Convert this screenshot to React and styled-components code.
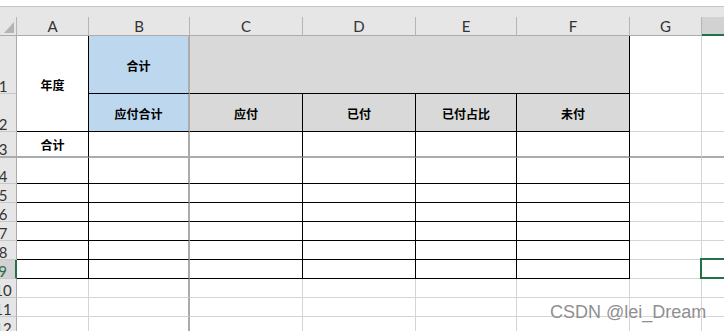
import React from 'react'
import styled, { createGlobalStyle } from 'styled-components'

const BLACK = '#000'
const GRID = '#d4d4d4'
const FREEZE = '#ababab'
const EXCEL_GREEN = '#217346'
const BLUE = '#bdd7ee'
const GRAY = '#d9d9d9'

const COLUMNS = ['A', 'B', 'C', 'D', 'E', 'F', 'G', 'H']
const COL_WIDTHS = [72, 101, 113, 113, 101, 113, 72, 72]
const ROW_HEIGHTS = [58, 38, 26, 26, 19, 19, 19, 19, 19, 19, 19, 19]

const TEXTS = {
  A1: '年度',
  B1: '合计',
  B2: '应付合计',
  C2: '应付',
  D2: '已付',
  E2: '已付占比',
  F2: '未付',
  A3: '合计'
}

const FILLS = {
  B1: BLUE,
  B2: BLUE,
  C1: GRAY,
  C2: GRAY,
  D2: GRAY,
  E2: GRAY,
  F2: GRAY
}

const SELECTED = 'H9'

const rightEdge = (col, row) => {
  if (col === 'B') return [FREEZE, 2]
  if (row <= 9 && 'ACDEF'.includes(col)) return [BLACK, 1]
  return [GRID, 1]
}

const bottomEdge = (col, row) => {
  if (row === 3) return [FREEZE, 2]
  if (row <= 9 && 'ABCDEF'.includes(col)) return [BLACK, 1]
  return [GRID, 1]
}

// merged ranges: A1:A2 and C1:F1
const isHidden = (col, row) => (col === 'A' && row === 2) || (row === 1 && 'DEF'.includes(col))

const GlobalStyle = createGlobalStyle`
  html, body {
    margin: 0;
    padding: 0;
    background: #fff;
  }
`

const Frame = styled.div`
  position: relative;
  width: 724px;
  height: 331px;
  overflow: hidden;
  background: #fff;
`

const TopGap = styled.div`
  height: 6px;
  background: #fff;
  border-bottom: 1px solid #c6c6c6;
`

const HeaderStrip = styled.div`
  height: 10px;
  background: #e6e6e6;
`

const Sheet = styled.div`
  display: grid;
  grid-template-columns: 17px ${COL_WIDTHS.map(w => `${w}px`).join(' ')};
  grid-template-rows: 19px ${ROW_HEIGHTS.map(h => `${h}px`).join(' ')};
  width: max-content;
`

const Corner = styled.div`
  position: relative;
  grid-column: 1;
  grid-row: 1;
  box-sizing: border-box;
  background: #e6e6e6;
  border-right: 1px solid #b5b5b5;
  border-bottom: 1px solid #ababab;
  &:after {
    content: '';
    position: absolute;
    right: 2px;
    bottom: 2px;
    width: 10px;
    height: 11px;
    background: #b4b4b4;
    clip-path: polygon(100% 0, 100% 100%, 0 100%);
  }
`

const ColHead = styled.div`
  grid-column: ${props => props.$col};
  grid-row: 1;
  box-sizing: border-box;
  display: flex;
  align-items: center;
  justify-content: center;
  background: ${props => props.$active ? '#d2d2d2' : '#e6e6e6'};
  border-right: 1px solid #b5b5b5;
  border-bottom: ${props => props.$active ? `2px solid ${EXCEL_GREEN}` : '1px solid #ababab'};
  font-family: Lato, "Liberation Sans", sans-serif;
  font-size: 15px;
  line-height: 18px;
  color: #333;
`

const RowHead = styled.div`
  grid-column: 1;
  grid-row: ${props => props.$row};
  box-sizing: border-box;
  display: flex;
  align-items: flex-end;
  justify-content: center;
  overflow: hidden;
  padding: 0 10px 1px 0;
  background: ${props => props.$active ? '#d2d2d2' : '#e6e6e6'};
  border-right: ${props => props.$active ? `2px solid ${EXCEL_GREEN}` : '1px solid #ababab'};
  border-bottom: ${props => props.$freeze ? `2px solid ${FREEZE}` : '1px solid #c8c8c8'};
  font-family: Lato, "Liberation Sans", sans-serif;
  font-size: 15px;
  line-height: 12px;
  color: ${props => props.$active ? '#2e6b48' : '#333'};
  white-space: nowrap;
`

const Cell = styled.div`
  position: relative;
  grid-column: ${props => props.$col} / span ${props => props.$cs || 1};
  grid-row: ${props => props.$row} / span ${props => props.$rs || 1};
  box-sizing: border-box;
  display: flex;
  align-items: center;
  justify-content: center;
  padding-top: 1px;
  background: ${props => props.$fill || '#fff'};
  border-right: ${props => props.$rw}px solid ${props => props.$r};
  border-bottom: ${props => props.$bw}px solid ${props => props.$b};
  font-family: "Noto Sans CJK SC", "Noto Sans", sans-serif;
  font-size: 12px;
  font-weight: 700;
  color: #000;
  white-space: nowrap;
  ${props => props.$selected && `
    &:after {
      content: '';
      position: absolute;
      top: -2px;
      left: -2px;
      right: -1px;
      bottom: -1px;
      border: 2px solid ${EXCEL_GREEN};
      pointer-events: none;
    }
  `}
`

const Watermark = styled.div`
  position: absolute;
  left: 550px;
  top: 303px;
  font-family: "Liberation Sans", Arial, sans-serif;
  font-size: 18px;
  line-height: 18px;
  color: #8f8f8f;
  text-shadow: 0 0 1px rgba(255, 255, 255, 0.9);
  white-space: nowrap;
  pointer-events: none;
`

const buildCells = () => {
  const cells = []
  ROW_HEIGHTS.forEach((_, i) => {
    const row = i + 1
    COLUMNS.forEach((col, j) => {
      if (isHidden(col, row)) return
      const ref = `${col}${row}`
      const [r, rw] = rightEdge(col, row)
      let [b, bw] = bottomEdge(col, row)
      if (ref === 'A1') [b, bw] = bottomEdge('A', 2)
      cells.push({
        ref,
        col: j + 2,
        row: row + 1,
        cs: ref === 'C1' ? 4 : 1,
        rs: ref === 'A1' ? 2 : 1,
        r, rw, b, bw,
        fill: FILLS[ref],
        text: TEXTS[ref] || ''
      })
    })
  })
  return cells
}

const cells = buildCells()
const selectedRow = parseInt(SELECTED.slice(1), 10)
const selectedCol = SELECTED[0]

export default function App () {
  return (
    <>
      <GlobalStyle />
      <Frame>
        <TopGap />
        <HeaderStrip />
        <Sheet>
          <Corner />
          {COLUMNS.map((c, j) => (
            <ColHead key={c} $col={j + 2} $active={c === selectedCol}>{c}</ColHead>
          ))}
          {ROW_HEIGHTS.map((_, i) => (
            <RowHead key={i} $row={i + 2} $active={i + 1 === selectedRow} $freeze={i + 1 === 3}>
              {i + 1}
            </RowHead>
          ))}
          {cells.map(c => (
            <Cell
              key={c.ref}
              $col={c.col}
              $row={c.row}
              $cs={c.cs}
              $rs={c.rs}
              $r={c.r}
              $rw={c.rw}
              $b={c.b}
              $bw={c.bw}
              $fill={c.fill}
              $selected={c.ref === SELECTED}
            >
              {c.text}
            </Cell>
          ))}
        </Sheet>
        <Watermark>CSDN @lei_Dream</Watermark>
      </Frame>
    </>
  )
}
